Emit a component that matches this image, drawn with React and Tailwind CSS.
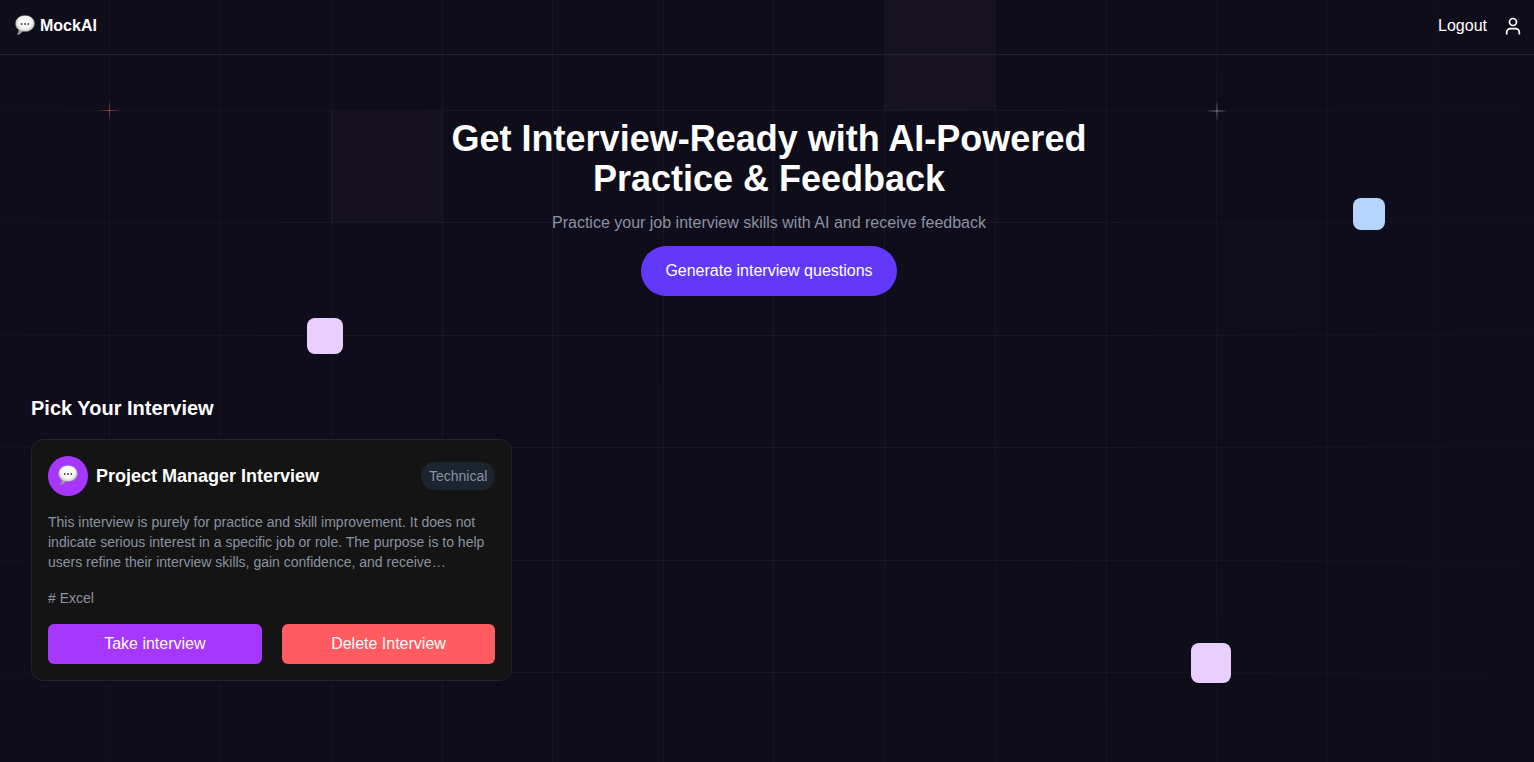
const COLUMNS = [109, 220, 331, 442, 552, 663, 773, 884, 995, 1106, 1216, 1327, 1438];
const ROWS = [110, 222, 335, 447, 560, 672];

function SpeechBalloon({ id }) {
  return (
    <svg className="h-[22px] w-5 shrink-0" viewBox="0 0 20 22" aria-hidden="true">
      <defs>
        <radialGradient id={id} gradientUnits="userSpaceOnUse" cx="10" cy="7.5" r="10.5" gradientTransform="translate(0 .5) scale(1 .93)">
          <stop offset="0" stopColor="#ffffff" />
          <stop offset="0.6" stopColor="#f6f6f6" />
          <stop offset="0.85" stopColor="#d2d2d2" />
          <stop offset="1" stopColor="#9a9a9a" />
        </radialGradient>
      </defs>
      <path
        d="M10 .4C4.700.4.500 3.800.500 8.500c0 2.800 1.300 5 3.300 6.400.1 1.500-.4 2.700-1.400 3.800-.4.500-.1 1 .5.900 2-.5 3.600-1.600 4.600-3.200.8.200 1.600.2 2.500.2 5.300 0 9.500-3.400 9.500-8.100S15.300.4 10 .4Z"
        fill={`url(#${id})`}
        stroke="#858585"
        strokeWidth="0.4"
      />
      <g fill="#3f3f3f">
        <circle cx="6.700" cy="9" r="0.900" />
        <circle cx="10" cy="9" r="0.900" />
        <circle cx="13.300" cy="9" r="0.900" />
      </g>
    </svg>
  );
}

function UserIcon() {
  return (
    <svg className="size-6" viewBox="0 0 24 24" fill="none" stroke="currentColor" strokeWidth="1.7" aria-hidden="true">
      <circle cx="12" cy="8" r="3.500" />
      <path d="M5.700 20.400v-2a3.800 3.800 0 0 1 3.800-3.800h5a3.800 3.800 0 0 1 3.800 3.800v2" />
    </svg>
  );
}

function Backdrop() {
  return (
    <svg
      className="pointer-events-none absolute inset-0 -z-10 h-full w-full"
      viewBox="0 0 1534 762"
      preserveAspectRatio="xMidYMin slice"
      aria-hidden="true"
    >
      <defs>
        <radialGradient id="fade" gradientUnits="userSpaceOnUse" cx="700" cy="340" r="860">
          <stop offset="0" stopColor="#fff" stopOpacity="0.045" />
          <stop offset="0.5" stopColor="#fff" stopOpacity="0.033" />
          <stop offset="1" stopColor="#fff" stopOpacity="0.01" />
        </radialGradient>
        <radialGradient id="red">
          <stop offset="0" stopColor="#b8524c" stopOpacity="0.7" />
          <stop offset="1" stopColor="#b8524c" stopOpacity="0" />
        </radialGradient>
        <radialGradient id="grey">
          <stop offset="0" stopColor="#a8a6b0" stopOpacity="0.6" />
          <stop offset="1" stopColor="#a8a6b0" stopOpacity="0" />
        </radialGradient>
      </defs>
      <g fill="#fff5d8">
        <rect x="331" y="111" width="111" height="111" fillOpacity="0.022" />
        <rect x="885" y="0" width="110" height="110" fillOpacity="0.026" />
        <rect x="1217" y="223" width="110" height="112" fillOpacity="0.009" />
      </g>
      <g fill="url(#fade)">
        {COLUMNS.map((x) => (
          <rect key={x} x={x} y="0" width="1" height="762" />
        ))}
        {ROWS.map((y) => (
          <rect key={y} x="0" y={y} width="1534" height="1" />
        ))}
      </g>
      <g fill="url(#red)">
        <rect x="98" y="110" width="23" height="1" />
        <rect x="109" y="99" width="1" height="23" />
      </g>
      <g fill="url(#grey)">
        <rect x="1205" y="110" width="24" height="2" />
        <rect x="1216" y="99" width="2" height="24" />
      </g>
    </svg>
  );
}

export default function App() {
  return (
    <div className="relative isolate min-h-screen overflow-hidden bg-[#100d1a] font-['Liberation_Sans',Arial,sans-serif] text-base text-white">
      <Backdrop />
      <span className="absolute top-[198px] right-[149px] size-8 rounded-lg bg-[#b5d5ff]" />
      <span className="absolute top-[318px] left-[20%] size-9 rounded-lg bg-[#e8cfff]" />
      <span className="absolute top-[643px] right-[303px] size-10 rounded-lg bg-[#e8cfff]" />

      <header className="flex items-center justify-between border-b border-[#1b2430] px-[15px] pt-3.5 pb-4">
        <a href="#home" className="flex items-center gap-[5px] font-bold">
          <SpeechBalloon id="balloon-logo" />
          MockAI
        </a>
        <div className="-mr-1.5 flex items-center gap-3.5">
          <button type="button">Logout</button>
          <a href="#profile" aria-label="Profile">
            <UserIcon />
          </a>
        </div>
      </header>

      <main className="pr-[27px] pl-[31px]">
        <section className="flex flex-col items-center gap-[11px] pt-16 text-center">
          <div className="flex flex-col items-center gap-3">
            <h1 className="max-w-2xl text-4xl font-bold">Get Interview-Ready with AI-Powered Practice &amp; Feedback</h1>
            <p className="text-[#8b92a0]">Practice your job interview skills with AI and receive feedback</p>
          </div>
          <button type="button" className="h-[50px] rounded-full bg-[#6239fb] px-6">
            Generate interview questions
          </button>
        </section>

        <section className="pt-[98px] pb-20">
          <h2 className="text-xl font-bold">Pick Your Interview</h2>
          <div className="mt-[17px] grid grid-cols-3 gap-4">
            <article className="flex flex-col gap-4 rounded-xl border border-[#1b2430] bg-[#141414] p-4">
              <div className="flex items-center gap-2">
                <span className="flex size-10 items-center justify-center rounded-full bg-[#a737ff]">
                  <SpeechBalloon id="balloon-card" />
                </span>
                <h3 className="flex-1 text-lg font-bold">Project Manager Interview</h3>
                <span className="rounded-full bg-[#1b2430] px-2 py-1 text-sm text-[#8b92a0]">Technical</span>
              </div>
              <p className="text-sm text-[#8b92a0]">
                This interview is purely for practice and skill improvement. It does not indicate serious interest in a
                specific job or role. The purpose is to help users refine their interview skills, gain confidence, and
                receive…
              </p>
              <p className="text-sm text-[#8b92a0]"># Excel</p>
              <div className="grid grid-cols-2 gap-5">
                <button type="button" className="h-10 rounded-md bg-[#a737ff]">
                  Take interview
                </button>
                <button type="button" className="h-10 rounded-md bg-[#ff5b61]">
                  Delete Interview
                </button>
              </div>
            </article>
          </div>
        </section>
      </main>
    </div>
  );
}
